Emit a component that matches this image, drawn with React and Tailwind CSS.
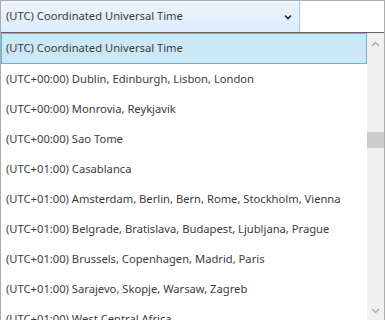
import React from 'react';

const zones = [
  '(UTC+00:00) Dublin, Edinburgh, Lisbon, London',
  '(UTC+00:00) Monrovia, Reykjavik',
  '(UTC+00:00) Sao Tome',
  '(UTC+01:00) Casablanca',
  '(UTC+01:00) Amsterdam, Berlin, Bern, Rome, Stockholm, Vienna',
  '(UTC+01:00) Belgrade, Bratislava, Budapest, Ljubljana, Prague',
  '(UTC+01:00) Brussels, Copenhagen, Madrid, Paris',
  '(UTC+01:00) Sarajevo, Skopje, Warsaw, Zagreb',
  '(UTC+01:00) West Central Africa',
];

const App = () => {
  return (
    <div
      className="w-[385px] h-[320px] overflow-hidden bg-white border-l border-t border-r border-[#acacac] text-[11.2px] text-[#3b3b3b] flex flex-col"
      style={{ fontFamily: '"Noto Sans", "Open Sans", sans-serif' }}
    >
      {/* Combo box */}
      <div className="flex h-[31px] shrink-0">
        <div className="w-[299px] flex items-center justify-between pl-[5px] pr-[7px] bg-gradient-to-b from-[#ecf4fc] to-[#dcecfc] border-r border-[#9ccaf0]">
          <span>(UTC) Coordinated Universal Time</span>
          <svg width="8" height="6" viewBox="0 0 8 6">
            <path d="M1 1.5 L4 4.5 L7 1.5" fill="none" stroke="#222" strokeWidth="1.6" />
          </svg>
        </div>
        <div className="flex-1 bg-white" />
      </div>
      <div className="h-px bg-[#646464] shrink-0" />

      {/* Dropdown list */}
      <div className="flex flex-1 min-h-0">
        <div className="flex-1 flex flex-col overflow-hidden">
          <div className="h-[31px] shrink-0 flex items-center pl-[4px] bg-[#cce8f7] border border-[#5cb6ea]">
            (UTC) Coordinated Universal Time
          </div>
          {zones.map((z) => (
            <div key={z} className="h-[30px] shrink-0 flex items-center pl-[5px] whitespace-nowrap">
              {z}
            </div>
          ))}
        </div>
        {/* Scrollbar */}
        <div className="w-[17px] bg-[#f0f0f0] flex flex-col items-center">
          <div className="h-[17px] w-full flex items-center justify-center mt-[2px]">
            <svg width="9" height="6" viewBox="0 0 9 6">
              <path d="M1 5 L4.5 1.5 L8 5" fill="none" stroke="#a6a6a6" strokeWidth="1.3" />
            </svg>
          </div>
          <div className="mt-[80px] h-[16px] w-full bg-[#cdcdcd]" />
          <div className="flex-1" />
          <div className="h-[17px] w-full flex items-center justify-center mb-[1px]">
            <svg width="9" height="6" viewBox="0 0 9 6">
              <path d="M1 1 L4.5 4.5 L8 1" fill="none" stroke="#a6a6a6" strokeWidth="1.3" />
            </svg>
          </div>
        </div>
      </div>
    </div>
  );
};

export default App;
